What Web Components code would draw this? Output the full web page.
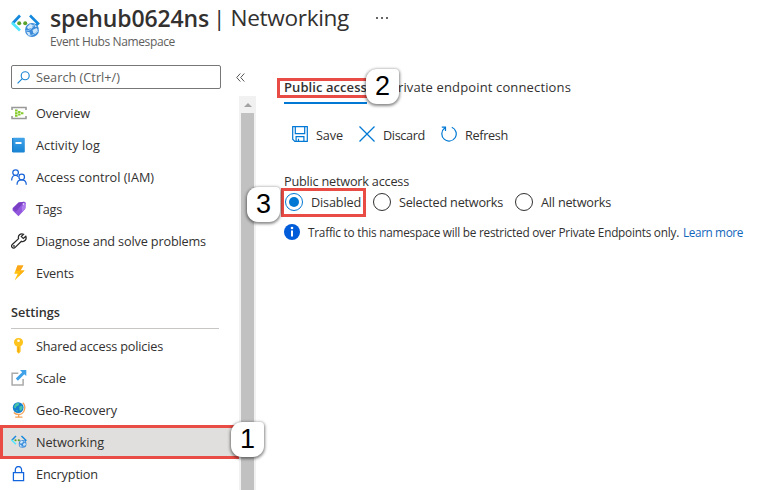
<!DOCTYPE html>
<html lang="en"><head><meta charset="utf-8"><title>Networking</title>
<style>html,body{margin:0;background:#fff;overflow:hidden}</style></head>
<body><azure-page></azure-page>
<script>
const icons = {
hub:`<svg viewBox="0 0 29 25"><path d="M9 1.5 1.5 9.5" fill="none" stroke="#1488dc" stroke-width="2.6"/><path d="M1 8.8 9 16.5" fill="none" stroke="#50e6ff" stroke-width="2.8"/><path d="m19 1.5 8 8-4 4" fill="none" stroke="#1488dc" stroke-width="2.6"/><circle cx="8.2" cy="9.3" r="2" fill="#5aa12c"/><circle cx="14.2" cy="9.3" r="2" fill="#5aa12c"/><circle cx="21" cy="16" r="7" fill="#3d8bd8"/><path d="m16 13 3-3 3 1-1 3-4 1zM21.5 16l4-2 1.8 3-3 3-2-1zM15.5 18h3l1 3-2 .5zM23.5 10.5l2.5 2-2 .5z" fill="#cfe7fb"/><path d="M14.5 17q6 0 9-7M17.5 22q7-1 10-7" stroke="#94c8f4" fill="none"/></svg>`,
search:`<svg viewBox="0 0 13 13" fill="none" stroke="#1683d3" stroke-width="1.1"><circle cx="8.2" cy="4.8" r="4"/><path d="M5.3 7.7.6 12.4"/></svg>`,
overview:`<svg viewBox="0 0 16 16"><path d="M1 5V2.5h14V5M1 11v2.5h14V11" fill="none" stroke="#999" stroke-width="1.6"/><path d="M4 4.6h2.6v2H4zM4 7.2h2.6v2H4zM4 9.8h2.6v2H4zM7.1 6h2.4v2H7.1zM7.1 8.6h2.4v2H7.1zM10 7.2h2.4v2H10z" fill="#82ca28"/></svg>`,
log:`<svg viewBox="0 0 16 16"><defs><linearGradient id="g" x2="0" y2="1"><stop stop-color="#42a4eb"/><stop offset="1" stop-color="#1683d2"/></linearGradient></defs><rect x="1.2" y=".7" width="12.6" height="14.8" rx="1" fill="url(#g)"/><path d="M1.7 1v14" stroke="#1677c2"/><rect x="4.5" y="5" width="6" height="2" fill="#fff"/></svg>`,
iam:`<svg viewBox="0 0 16 16" fill="none" stroke="#1864d9" stroke-width="1.25"><circle cx="4.6" cy="3.6" r="2.8"/><path d="M.7 11.5c0-6 4.8-6 6.4-3.8"/><circle cx="10.7" cy="8" r="2.8"/><path d="M6 15.7c.2-6.3 9-6.3 9.3 0"/></svg>`,
tag:`<svg viewBox="0 0 16 16"><path d="m7.6 1.6 5.6-.8q1.5 0 1.6 1.5L14.2 8 7.5 15.2 1.6 9.4V7z" fill="#9257dc"/><path d="m7.6 1.6 5.6-.8-8.4 10L1.6 8z" fill="#7940c4"/><path d="m10.5 6 3.8-4.8.4 5.8-3.5 3.8z" fill="#ae7ced"/><circle cx="12.4" cy="3" r=".8" fill="#fff"/></svg>`,
wrench:`<svg viewBox="0 0 16 16" fill="none" stroke="#292929" stroke-width="1.25"><path d="M14.8 3.2 12.3 5.5l-2-1.9 2.3-2.4C9.4-.2 6.6 2.6 7.6 5.6L1.3 11.5c-2 2 .9 4.9 2.9 2.9l6.2-6.1c3 1 5.7-2.1 4.4-5.1z"/><circle cx="3" cy="13" r=".3"/></svg>`,
bolt:`<svg viewBox="0 0 16 16"><path d="M6.4.6h6L9.4 5.6h4.2L3.6 15.5 6.7 8.7H3.2z" fill="#ffc20f"/><path d="M6.4.6h6L9.4 5.6 5 6z" fill="#fba51d"/><path d="M9.4 5.6h4.2L7 12z" fill="#ffb013"/></svg>`,
key:`<svg viewBox="0 0 16 16"><path d="M7.5 0c3 0 4.6 2 4.5 4.2 0 2-1 3.2-2.4 4v5.6l-1.9 1.9-1.9-1.9V8.3C4 7.5 3 6.2 3 4.2 3 2 4.6 0 7.5 0z" fill="#ffc31e"/><path d="M7.3 8.7v5.5" stroke="#f1a211"/><circle cx="7.5" cy="2.7" r="1.3" fill="#fff"/></svg>`,
scale:`<svg viewBox="0 0 16 16"><path d="M7.3 3.2H1.1v11.7h11V9" fill="none" stroke="#aaa" stroke-width="1.5"/><path d="M9 0h6.3v6.1l-2-1.8-6.4 6.4-2.1-2.1 6.4-6.4z" fill="#3fa1e7"/></svg>`,
globe:`<svg viewBox="0 0 16 16"><path d="M11.8.8c4 4 1.5 11.7-4 11.7-2.3 0-4-.8-5-2M7.7 12.5v2.3M4.2 15.2h7.3" fill="none" stroke="#f2a255" stroke-width="1.3"/><circle cx="7.2" cy="5.6" r="5.4" fill="#1480cf"/><path d="m4 2.5 2-1.8 2.5.7-1 2-2.2 1.2-.6 1.6-1.9-.6zM8.3 4.7l2.6-1.3 1 2.5-2 3-1.3-.7zM4.5 8l2 .3.4 1.7z" fill="#49c4a6"/></svg>`,
lock:`<svg viewBox="0 0 16 16" fill="none" stroke="#1265dd" stroke-width="1.25"><path d="M2.4 6.7h10.2v7.8H2.4zM4.3 6.5V4.1c0-4.8 6.3-4.8 6.3 0v2.4"/></svg>`,
save:`<svg viewBox="0 0 16 16" fill="none" stroke="#0078d4" stroke-width="1.2"><path d="M.7.7h14.6v14.6H2.8L.7 13.2zM3.3.7v7h9.4v-7M4.1 15v-4.4h7.8V15M6.5 15v-2.3"/></svg>`,
discard:`<svg viewBox="0 0 16 16" fill="none" stroke="#0078d4" stroke-width="1.25"><path d="m.5.5 15 15m0-15-15 15"/></svg>`,
refresh:`<svg viewBox="0 0 16 16" fill="none" stroke="#0078d4" stroke-width="1.2"><path d="M10.8 1.2A7.2 7.2 0 1 1 3.7 2.1M.8 1.2h3.7v3.7"/></svg>`,
info:`<svg viewBox="0 0 16 16"><circle cx="8" cy="8" r="8" fill="#015cda"/><circle cx="8" cy="4" r="1.3" fill="#fff"/><path d="M8 6.5v6" stroke="#fff" stroke-width="2"/></svg>`,
collapse:`<svg viewBox="0 0 9 9" fill="none" stroke="#555" stroke-width="1"><path d="M4.3.5.7 4.5l3.6 4M8.3.5l-3.6 4 3.6 4"/></svg>`
};
const define = (name, render) => customElements.define(name, class extends HTMLElement {
  connectedCallback(){ if(!this.shadowRoot) this.attachShadow({mode:'open'}).innerHTML = render(this); }
});
define('ui-icon', e=>`<style>:host{display:block;flex:none;width:16px;height:16px}svg{display:block;width:100%;height:100%}</style>${icons[e.getAttribute('name')]}`);
define('step-badge', ()=>`<style>:host{position:absolute;display:flex;align-items:center;justify-content:center;width:33px;height:35px;border-radius:11px 4px 11px 11px;background:#fff;box-shadow:0 1px 3px 1px #0007;font:27px/35px "Liberation Sans",Arial,sans-serif;color:#000;z-index:3}</style><slot></slot>`);
define('nav-item', e=>`<style>:host{display:flex;box-sizing:border-box;height:32px;align-items:center;padding-left:11px;gap:9px}
:host([selected]){background:#e1dfdd;outline:3px solid #e94b45;outline-offset:-3px;height:34px;margin:-1px 0;width:239px}</style><ui-icon name="${e.getAttribute('icon')}"></ui-icon><fit-text w="${e.getAttribute('w')}"><slot></slot></fit-text>`);
define('command-button', e=>`<style>:host{display:flex;align-items:center;gap:8px;height:18px}fit-text{margin-top:2px}</style><ui-icon name="${e.getAttribute('icon')}"></ui-icon><fit-text w="${e.getAttribute('w')}"><slot></slot></fit-text>`);
define('radio-option', e=>`<style>:host{display:flex;align-items:center;gap:8px;height:20px}i{box-sizing:border-box;width:18px;height:18px;border:1px solid #323130;border-radius:50%;display:grid;place-items:center}:host([checked]) i{border-color:#0078d4}:host([checked]) i:after{content:"";width:10px;height:10px;border-radius:50%;background:#0078d4}</style><i></i><fit-text w="${e.getAttribute('w')}"><slot></slot></fit-text>`);
define('page-header', ()=>`<style>:host{display:flex;height:57px;box-sizing:border-box;padding:14px 0 0 11px;gap:10px}
ui-icon{width:29px;height:25px}.copy{display:flex;flex-direction:column;margin-top:-10px}.title{display:flex;height:29px;line-height:28px;font-size:22.6px}.title b{font-weight:600;font-size:23px}.sub{font-size:12px;color:#605e5c;line-height:18px}.more{display:flex;gap:3px;margin:13px 0 0 27px}.more i{width:2px;height:2px;background:#666}</style>
<ui-icon name="hub"></ui-icon><div class="copy"><div class="title"><b><fit-text w="159">spehub0624ns</fit-text></b><fit-text w="136" style="margin-left:4px">| Networking</fit-text><div class="more"><i></i><i></i><i></i></div></div><div class="sub"><fit-text w="125">Event Hubs Namespace</fit-text></div></div>`);
define('side-nav', ()=>`<style>:host{display:block;width:239px;height:433px}.search{display:flex;align-items:center;gap:12px;padding:8px 0 0 11px;height:24px;margin-bottom:8px}.box{box-sizing:border-box;width:210px;height:24px;flex:none;border:1px solid #777;border-radius:2px;display:flex;align-items:center;padding-left:5px;gap:6px;color:#605e5c}.box ui-icon{width:13px;height:13px}.search>ui-icon{width:9px;height:9px;margin-left:3px}.head{box-sizing:border-box;height:41px;padding:14px 0 0 11px;font-weight:600;line-height:18px}.head:after{content:"";display:block;width:208px;height:1px;background:#c8c6c4;margin-top:7px}</style>
<div class="search"><div class="box"><ui-icon name="search"></ui-icon><fit-text w="84">Search (Ctrl+/)</fit-text></div><ui-icon name="collapse"></ui-icon></div>
<nav><nav-item icon="overview" w="54">Overview</nav-item><nav-item icon="log" w="64">Activity log</nav-item><nav-item icon="iam" w="118">Access control (IAM)</nav-item><nav-item icon="tag" w="26">Tags</nav-item><nav-item icon="wrench" w="170">Diagnose and solve problems</nav-item><nav-item icon="bolt" w="38">Events</nav-item><div class="head"><fit-text w="49">Settings</fit-text></div><nav-item icon="key" w="127">Shared access policies</nav-item><nav-item icon="scale" w="30">Scale</nav-item><nav-item icon="globe" w="81">Geo-Recovery</nav-item><nav-item icon="hub" w="68" selected>Networking</nav-item><nav-item icon="lock" w="62">Encryption</nav-item></nav>`);
define('scroll-rail', ()=>`<style>:host{display:flex;flex-direction:column;align-items:center;box-sizing:border-box;width:17px;height:394px;background:#f1f1f1;margin-top:39px}i{border:4px solid transparent;border-top:0;border-bottom:4px solid #a3a3a3;margin:7px 0 6px}b{width:13px;flex:1;background:#c1c1c1}</style><i></i><b></b>`);
define('network-panel', ()=>`<style>:host{display:block;padding:21px 0 0 28px;flex:1}.tabs{display:flex;height:26px;line-height:18px;font-size:13px}.tab{position:relative;width:83px;height:26px;box-sizing:border-box;border-bottom:2px solid #0078d4;font-weight:600}.mark{position:absolute;box-sizing:border-box;border:3px solid #e94b45}.tab .mark{left:-7px;top:0;width:94px;height:20px}.tabs>fit-text{margin-left:23px}.commands{display:flex;margin:21px 0 0 8px}.commands>*+*{margin-left:16px}.label{margin-top:28px;line-height:20px;height:20px}.radios{position:relative;display:flex;margin:1px 0 0 1px;gap:12px}.radios .mark{left:-4px;top:-4px;width:85px;height:29px}.info{display:flex;align-items:center;gap:8px;height:20px;margin-top:10px;font-size:11.8px}.info a{color:#1267bb;margin-left:-4px}</style>
<div class="tabs"><div class="tab"><fit-text w="83">Public access</fit-text><div class="mark"></div></div><fit-text w="181">Private endpoint connections</fit-text></div>
<div class="commands"><command-button icon="save" w="27">Save</command-button><command-button icon="discard" w="42">Discard</command-button><command-button icon="refresh" w="43">Refresh</command-button></div>
<div class="label"><fit-text w="125">Public network access</fit-text></div>
<div class="radios"><radio-option checked w="50">Disabled</radio-option><radio-option w="104">Selected networks</radio-option><radio-option w="70">All networks</radio-option><div class="mark"></div></div>
<div class="info"><ui-icon name="info"></ui-icon><fit-text w="371">Traffic to this namespace will be restricted over Private Endpoints only.</fit-text><a><fit-text w="60">Learn more</fit-text></a></div>`);
define('azure-page', ()=>`<style>:host{display:block;position:relative;width:761px;height:490px;overflow:hidden;font:12.7px/20px "Open Sans","Noto Sans",sans-serif;color:#323130}.body{display:flex;height:433px}</style><page-header></page-header><div class="body"><side-nav></side-nav><scroll-rail></scroll-rail><network-panel></network-panel></div><step-badge style="left:231px;top:422px">1</step-badge><step-badge style="left:366px;top:69px">2</step-badge><step-badge style="left:247px;top:187px">3</step-badge>`);
// Spreads a label over its nominal advance width.
customElements.define('fit-text', class extends HTMLElement {
  connectedCallback(){
    const root=this.attachShadow({mode:'open'});
    root.innerHTML='<style>:host{display:block;white-space:nowrap}span{display:inline-block}</style><span><slot></slot></span>';
    const span=root.querySelector('span'), w=+this.getAttribute('w');
    let n=this.textContent.length;
    const slot=this.querySelector('slot');
    if(slot) n=slot.assignedNodes().map(x=>x.textContent).join('').length;
    this.style.width=w+'px';
    span.style.letterSpacing=(w-span.getBoundingClientRect().width)/n+'px';
  }
});
</script></body></html>
